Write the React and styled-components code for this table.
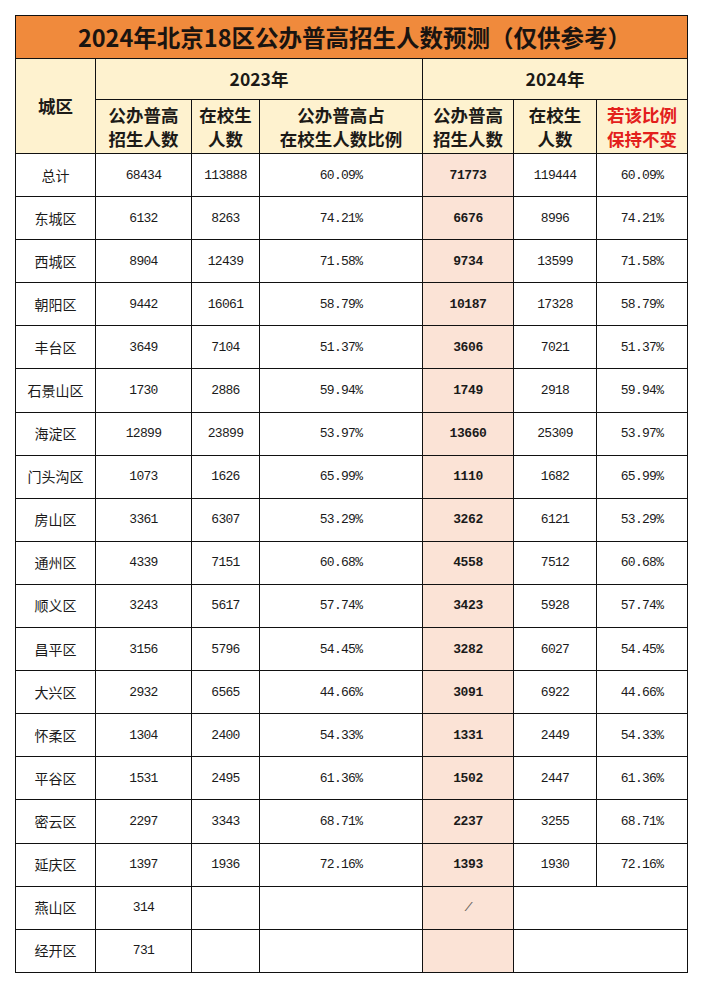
import React from 'react';
import styled, { createGlobalStyle } from 'styled-components';

const GlobalStyle = createGlobalStyle`
  body {
    margin: 0;
    background: #fff;
    font-family: "Noto Sans CJK SC", sans-serif;
  }
`;

const rows = [
  ['总计', '68434', '113888', '60.09%', '71773', '119444', '60.09%'],
  ['东城区', '6132', '8263', '74.21%', '6676', '8996', '74.21%'],
  ['西城区', '8904', '12439', '71.58%', '9734', '13599', '71.58%'],
  ['朝阳区', '9442', '16061', '58.79%', '10187', '17328', '58.79%'],
  ['丰台区', '3649', '7104', '51.37%', '3606', '7021', '51.37%'],
  ['石景山区', '1730', '2886', '59.94%', '1749', '2918', '59.94%'],
  ['海淀区', '12899', '23899', '53.97%', '13660', '25309', '53.97%'],
  ['门头沟区', '1073', '1626', '65.99%', '1110', '1682', '65.99%'],
  ['房山区', '3361', '6307', '53.29%', '3262', '6121', '53.29%'],
  ['通州区', '4339', '7151', '60.68%', '4558', '7512', '60.68%'],
  ['顺义区', '3243', '5617', '57.74%', '3423', '5928', '57.74%'],
  ['昌平区', '3156', '5796', '54.45%', '3282', '6027', '54.45%'],
  ['大兴区', '2932', '6565', '44.66%', '3091', '6922', '44.66%'],
  ['怀柔区', '1304', '2400', '54.33%', '1331', '2449', '54.33%'],
  ['平谷区', '1531', '2495', '61.36%', '1502', '2447', '61.36%'],
  ['密云区', '2297', '3343', '68.71%', '2237', '3255', '68.71%'],
  ['延庆区', '1397', '1936', '72.16%', '1393', '1930', '72.16%'],
];

const extraRows = [
  ['燕山区', '314', '/'],
  ['经开区', '731', ''],
];

const ORANGE = '#f08a3c';
const CREAM = '#fef2cf';
const PINK = '#fbe3d6';

const App = () => {
  return (
    <Page>
      <GlobalStyle />
      <Sheet>
        <Title>2024年北京18区公办普高招生人数预测（仅供参考）</Title>

        <HeadCell $rows={2}>城区</HeadCell>
        <HeadCell $cols={3}>2023年</HeadCell>
        <HeadCell $cols={3}>2024年</HeadCell>

        <HeadCell>公办普高<br />招生人数</HeadCell>
        <HeadCell>在校生<br />人数</HeadCell>
        <HeadCell>公办普高占<br />在校生人数比例</HeadCell>
        <HeadCell>公办普高<br />招生人数</HeadCell>
        <HeadCell>在校生<br />人数</HeadCell>
        <HeadCell $red>若该比例<br />保持不变</HeadCell>

        {rows.map((r) => (
          <React.Fragment key={r[0]}>
            <NameCell>{r[0]}</NameCell>
            <NumCell>{r[1]}</NumCell>
            <NumCell>{r[2]}</NumCell>
            <NumCell>{r[3]}</NumCell>
            <NumCell $pink $bold>{r[4]}</NumCell>
            <NumCell>{r[5]}</NumCell>
            <NumCell>{r[6]}</NumCell>
          </React.Fragment>
        ))}

        {extraRows.map((r) => (
          <React.Fragment key={r[0]}>
            <NameCell>{r[0]}</NameCell>
            <NumCell>{r[1]}</NumCell>
            <NumCell />
            <NumCell />
            <NumCell $pink $muted>{r[2]}</NumCell>
            <NumCell $cols={2} />
          </React.Fragment>
        ))}
      </Sheet>
    </Page>
  );
};

export default App;

const Page = styled.div`
  padding: 15px;
`;

const Sheet = styled.div`
  display: grid;
  grid-template-columns: 79px 95px 67px 162px 90px 82px 90px;
  grid-template-rows: 42px 40px 53px;
  grid-auto-rows: 42.1px;
  gap: 1px;
  padding: 1px;
  width: max-content;
  background: #111;
`;

const Cell = styled.div`
  display: flex;
  align-items: center;
  justify-content: center;
  text-align: center;
  background: #fff;
  grid-column: span ${(p) => p.$cols || 1};
  grid-row: span ${(p) => p.$rows || 1};
`;

const Title = styled(Cell)`
  grid-column: 1 / -1;
  background: ${ORANGE};
  color: #1a1410;
  font-size: 23.5px;
  font-weight: 700;
  padding-left: 6px;
`;

const HeadCell = styled(Cell)`
  background: ${CREAM};
  color: ${(p) => (p.$red ? '#e3201c' : '#1c1a17')};
  font-size: 17.5px;
  font-weight: 700;
  line-height: 24px;
`;

const NameCell = styled(Cell)`
  font-size: 14px;
  font-weight: 400;
  color: #1a1a1a;
  padding-bottom: 1px;
`;

const NumCell = styled(Cell)`
  background: ${(p) => (p.$pink ? PINK : '#fff')};
  font-family: "Liberation Mono", "Noto Sans CJK SC", monospace;
  font-size: 13px;
  letter-spacing: ${(p) => (p.$bold ? '-0.4px' : '-0.7px')};
  font-weight: ${(p) => (p.$bold ? 700 : 400)};
  color: ${(p) => (p.$muted ? '#6b6560' : '#1a1a1a')};
  font-style: ${(p) => (p.$muted ? 'italic' : 'normal')};
`;
